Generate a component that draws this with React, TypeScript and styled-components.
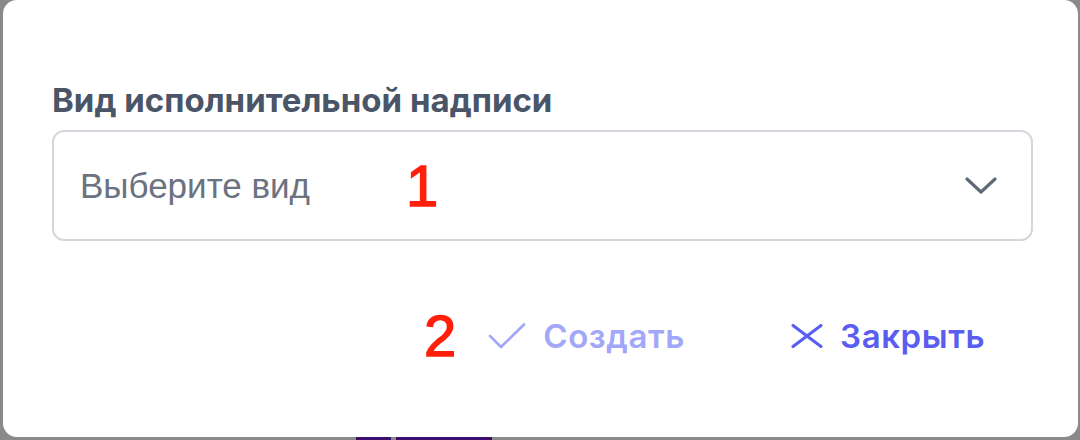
import styled, { createGlobalStyle } from "styled-components";

const GlobalStyle = createGlobalStyle`
  html, body {
    margin: 0;
    padding: 0;
    background: #8a8a8a;
  }
  body {
    width: 1080px;
    height: 440px;
    overflow: hidden;
  }
`;

const Backdrop = styled.div`
  width: 1080px;
  height: 440px;
  display: flex;
  flex-direction: column;
  background: #8a8a8a;
`;

const Modal = styled.div`
  margin: 0 2px 0 3px;
  height: 437px;
  background: #ffffff;
  border-radius: 14px;
  box-sizing: border-box;
  padding: 80px 45px 0 49px;
  display: flex;
  flex-direction: column;
`;

const Label = styled.div`
  font-family: Inter, "Noto Sans", sans-serif;
  font-weight: 700;
  font-size: 33px;
  color: #4a5567;
  line-height: 40px;
`;

const Select = styled.div`
  margin-top: 10px;
  height: 111px;
  box-sizing: border-box;
  border: 2px solid #d3d7de;
  border-radius: 12px;
  display: flex;
  align-items: center;
  padding: 0 34px 0 26px;
`;

const Placeholder = styled.span`
  font-family: "Liberation Sans", Arial, sans-serif;
  font-size: 35px;
  color: #6b7280;
`;

const Marker = styled.span<{ $left: number }>`
  font-family: "Liberation Sans", Arial, sans-serif;
  font-size: 58px;
  color: #ff1f0a;
  -webkit-text-stroke: 1.4px #ff1f0a;
  line-height: 1;
  margin-left: ${(p) => p.$left}px;
`;

const Spacer = styled.div`
  flex: 1;
`;

const Footer = styled.div`
  margin-top: 66px;
  display: flex;
  align-items: center;
  padding-left: 372px;
`;

const Action = styled.button<{ $tone: "muted" | "strong"; $gap: number }>`
  border: 0;
  background: none;
  padding: 0;
  margin-left: ${(p) => p.$gap}px;
  display: flex;
  align-items: center;
  gap: 17px;
  font-family: Inter, "Noto Sans", sans-serif;
  font-weight: 600;
  font-size: 33px;
  letter-spacing: 0.6px;
  color: ${(p) => (p.$tone === "muted" ? "#a2a7fa" : "#5a5ef0")};
  cursor: pointer;
`;

const Strip = styled.div`
  height: 3px;
  display: flex;
`;

const StripBit = styled.div<{ $left: number; $width: number }>`
  margin-left: ${(p) => p.$left}px;
  width: ${(p) => p.$width}px;
  background: #3a0f6e;
`;

const Chevron = () => (
  <svg width="32" height="18" viewBox="0 0 32 18" fill="none">
    <path d="M2 2 L16 15 L30 2" stroke="#5f6a79" strokeWidth="3.2" strokeLinecap="round" strokeLinejoin="round" />
  </svg>
);

const Check = () => (
  <svg width="38" height="26" viewBox="0 0 38 26" fill="none">
    <path d="M2 13 L13 24 L36 1.5" stroke="currentColor" strokeWidth="2.6" strokeLinecap="round" strokeLinejoin="round" />
  </svg>
);

const Cross = () => (
  <svg width="32" height="24" viewBox="0 0 32 24" fill="none">
    <path d="M2 1.5 L30 22.5 M30 1.5 L2 22.5" stroke="currentColor" strokeWidth="3" strokeLinecap="round" />
  </svg>
);

export default function App() {
  return (
    <>
      <GlobalStyle />
      <Backdrop>
        <Modal>
          <Label>Вид исполнительной надписи</Label>
          <Select>
            <Placeholder>Выберите вид</Placeholder>
            <Marker $left={96}>1</Marker>
            <Spacer />
            <Chevron />
          </Select>
          <Footer>
            <Marker $left={0}>2</Marker>
            <Action $tone="muted" $gap={32}>
              <Check />
              Создать
            </Action>
            <Action $tone="strong" $gap={106}>
              <Cross />
              Закрыть
            </Action>
          </Footer>
        </Modal>
        <Strip>
          <StripBit $left={356} $width={35} />
          <StripBit $left={5} $width={96} />
        </Strip>
      </Backdrop>
    </>
  );
}
